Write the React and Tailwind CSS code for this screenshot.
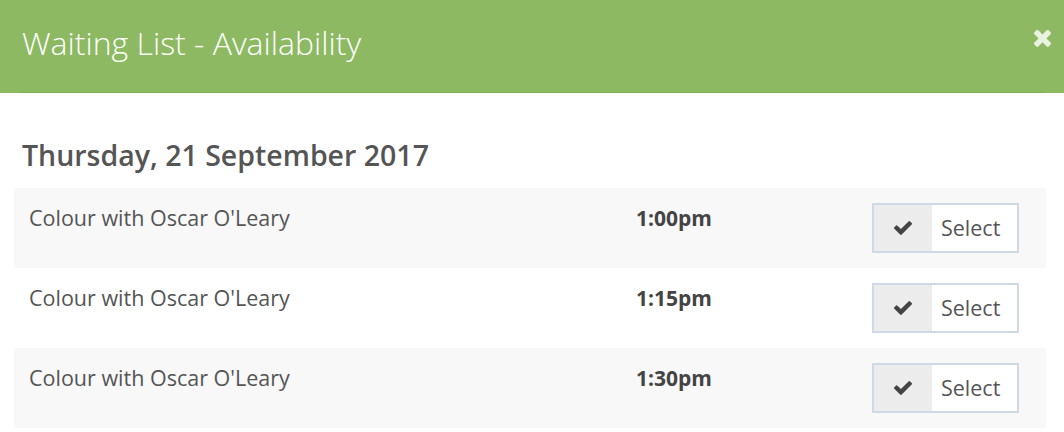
export default function App() {
  const slots = [
    { name: "Colour with Oscar O'Leary", time: "1:00pm" },
    { name: "Colour with Oscar O'Leary", time: "1:15pm" },
    { name: "Colour with Oscar O'Leary", time: "1:30pm" },
  ];

  return (
    <div className="w-[1064px] h-[432px] bg-white overflow-hidden" style={{ fontFamily: '"Open Sans", sans-serif' }}>
      {/* Header */}
      <div className="bg-[#8cb962] h-[93px]">
        <div className="mx-5 h-[93px] border-b border-[#82ad58] flex items-start justify-between">
          <h1 className="pt-[23px] pl-[2px] text-[32px] leading-[40px] font-light text-white">Waiting List - Availability</h1>
          <button className="mt-[28px] mr-[-7px] text-[#eaf2e2]">
            <svg width="17" height="19" viewBox="110 238 1188 1316" fill="currentColor">
              <path d="M1298 1322q0 40-28 68l-136 136q-28 28-68 28t-68-28l-294-294-294 294q-28 28-68 28t-68-28l-136-136q-28-28-28-68t28-68l294-294-294-294q-28-28-28-68t28-68l136-136q28-28 68-28t68 28l294 294 294-294q28-28 68-28t68 28l136 136q28 28 28 68t-28 68l-294 294 294 294q28 28 28 68z" />
            </svg>
          </button>
        </div>
      </div>

      {/* Body */}
      <div className="px-[14px]">
        <h2 className="pt-[42px] pb-[13px] pl-2 text-[28.5px] leading-[40px] font-semibold text-[#555]">Thursday, 21 September 2017</h2>
        <div className="w-[1032px]">
          {slots.map((slot, i) => (
            <div key={slot.time} className={`flex h-[80px] ${i % 2 === 0 ? "bg-[#f8f8f8]" : "bg-white"}`}>
              <div className="w-[622px] pl-[15px] pt-4 text-[21.5px] leading-[28px] text-[#555]">{slot.name}</div>
              <div className="flex-1 pt-4 text-[21px] leading-[28px] font-bold text-[#444]">{slot.time}</div>
              <div className="flex items-center pr-[27px]">
                <button className="flex h-[50px] w-[147px] border-2 border-[#cfd9e3] bg-white">
                  <span className="w-[58px] h-full bg-[#ececec] flex items-center justify-center text-[#444]">
                    <svg width="18" height="14" viewBox="121 334 1550 1188" fill="currentColor">
                      <path d="M1671 566q0 40-28 68l-724 724-136 136q-28 28-68 28t-68-28l-136-136-362-362q-28-28-28-68t28-68l136-136q28-28 68-28t68 28l294 295 656-657q28-28 68-28t68 28l136 136q28 28 28 68z" />
                    </svg>
                  </span>
                  <span className="flex-1 flex items-center pl-[9px] text-[21.5px] text-[#555]">Select</span>
                </button>
              </div>
            </div>
          ))}
        </div>
      </div>
    </div>
  );
}
